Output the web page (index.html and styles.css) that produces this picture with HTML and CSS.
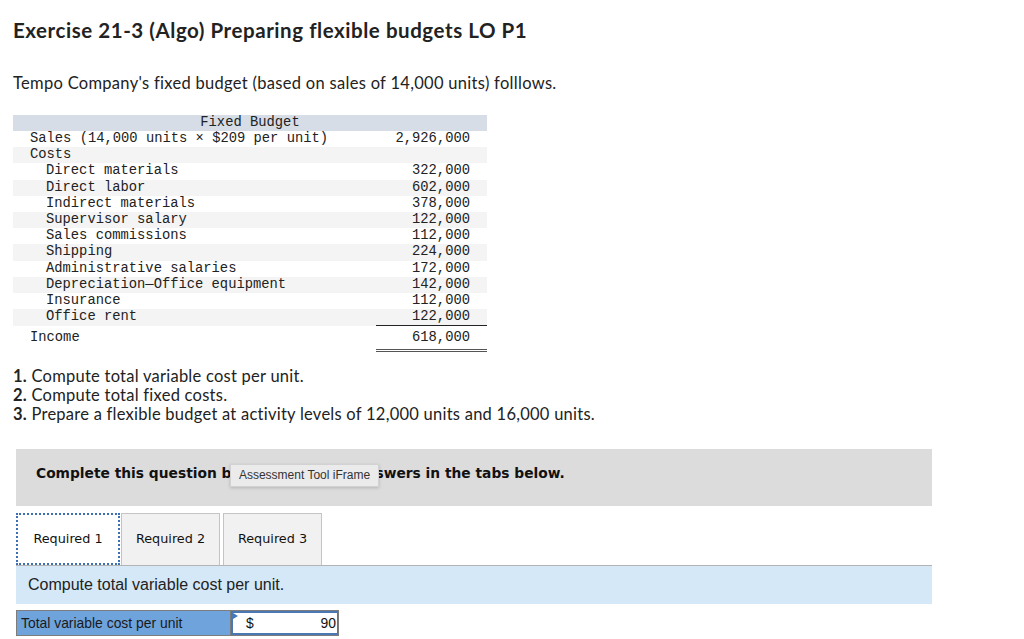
FILE: index.html
```html
<!DOCTYPE html>
<html>
<head>
<meta charset="utf-8">
<link rel="stylesheet" href="styles.css">
</head>
<body>
<div class="page">
  <h1 class="title">Exercise 21-3 (Algo) Preparing flexible budgets LO P1</h1>
  <p class="intro">Tempo Company's fixed budget (based on sales of 14,000 units) folllows.</p>

  <table class="budget">
    <thead>
      <tr><th colspan="2">Fixed Budget</th></tr>
    </thead>
    <tbody>
      <tr><td class="lbl">Sales (14,000 units × $209 per unit)</td><td class="num">2,926,000</td></tr>
      <tr class="alt"><td class="lbl">Costs</td><td class="num"></td></tr>
      <tr><td class="lbl sub">Direct materials</td><td class="num">322,000</td></tr>
      <tr class="alt"><td class="lbl sub">Direct labor</td><td class="num">602,000</td></tr>
      <tr><td class="lbl sub">Indirect materials</td><td class="num">378,000</td></tr>
      <tr class="alt"><td class="lbl sub">Supervisor salary</td><td class="num">122,000</td></tr>
      <tr><td class="lbl sub">Sales commissions</td><td class="num">112,000</td></tr>
      <tr class="alt"><td class="lbl sub">Shipping</td><td class="num">224,000</td></tr>
      <tr><td class="lbl sub">Administrative salaries</td><td class="num">172,000</td></tr>
      <tr class="alt"><td class="lbl sub">Depreciation—Office equipment</td><td class="num">142,000</td></tr>
      <tr><td class="lbl sub">Insurance</td><td class="num">112,000</td></tr>
      <tr class="alt"><td class="lbl sub">Office rent</td><td class="num under">122,000</td></tr>
      <tr class="total"><td class="lbl">Income</td><td class="num dbl">618,000</td></tr>
    </tbody>
  </table>

  <ol class="questions">
    <li><b>1.</b> Compute total variable cost per unit.</li>
    <li><b>2.</b> Compute total fixed costs.</li>
    <li><b>3.</b> Prepare a flexible budget at activity levels of 12,000 units and 16,000 units.</li>
  </ol>

  <div class="notice">
    <span class="notice-text">Complete this question by entering your answers in the tabs below.</span>
    <span class="tooltip">Assessment Tool iFrame</span>
  </div>

  <div class="tabs">
    <div class="tab active">Required 1</div>
    <div class="tab tab2">Required 2</div>
    <div class="tab tab3">Required 3</div>
  </div>
  <div class="panel">Compute total variable cost per unit.</div>

  <div class="answer">
    <div class="answer-label">Total variable cost per unit</div>
    <div class="answer-input">
      <span class="flag"></span>
      <span class="dollar">$</span>
      <span class="value">90</span>
    </div>
  </div>
</div>
</body>
</html>
```

FILE: styles.css
```css
html, body {
  margin: 0;
  padding: 0;
  background: #ffffff;
}

.page {
  padding: 0 0 0 13px;
  font-family: "Lato", "Open Sans", sans-serif;
  color: #222;
  width: 1011px;
  height: 639px;
  overflow: hidden;
}

.title {
  margin: 0;
  padding-top: 17px;
  font-size: 20.5px;
  letter-spacing: 0.55px;
  line-height: 26px;
  font-weight: 700;
  color: #222;
}

.intro {
  margin: 0;
  padding-top: 29px;
  font-size: 16.5px;
  letter-spacing: 0.3px;
  line-height: 22px;
  color: #222;
}

.budget {
  margin-top: 21px;
  border-collapse: collapse;
  width: 474px;
  font-family: "Liberation Mono", "Courier New", monospace;
  font-size: 13.8px;
  color: #222;
}

.budget th {
  background: #d7dde6;
  font-weight: normal;
  height: 16px;
  line-height: 16px;
  padding: 0;
  text-align: center;
}

.budget td {
  height: 16.2px;
  line-height: 16px;
  padding: 0;
  white-space: pre;
}

.budget tr.alt td {
  background: #f4f4f4;
}

.budget .lbl {
  padding-left: 17px;
}

.budget .lbl.sub {
  padding-left: 33px;
}

.budget .num {
  width: 94px;
  padding-right: 17px;
  text-align: right;
}

.budget .under {
  border-bottom: 1px solid #222;
}

.budget tr.total td {
  height: 19px;
  line-height: 16px;
  padding-top: 4px;
  vertical-align: top;
}

.budget .dbl {
  border-bottom: 3px double #555;
}

.questions {
  list-style: none;
  margin: 15px 0 0 0;
  padding: 0;
  font-size: 16.5px;
  letter-spacing: 0.25px;
  line-height: 19px;
  color: #222;
}

.questions b {
  font-weight: 700;
}

.notice {
  position: relative;
  margin-top: 25px;
  margin-left: 3px;
  width: 916px;
  height: 57px;
  background: #dcdcdc;
  box-sizing: border-box;
  padding: 13px 0 0 20px;
}

.notice-text {
  font-family: "DejaVu Sans", Verdana, sans-serif;
  font-weight: 700;
  font-size: 13.8px;
  line-height: 18px;
  color: #111;
}

.tooltip {
  position: absolute;
  left: 214px;
  top: 15px;
  width: 149px;
  height: 23px;
  box-sizing: border-box;
  background: #ebebeb;
  border: 1px solid #d2d2d2;
  box-shadow: 0 1px 3px rgba(0, 0, 0, 0.18);
  font-family: "Liberation Sans", Arial, sans-serif;
  font-size: 12px;
  line-height: 21px;
  color: #333;
  text-align: center;
}

.tabs {
  display: flex;
  margin-top: 7px;
  margin-left: 3px;
  width: 916px;
  height: 52px;
  border-bottom: 1px solid #b4b4b4;
  box-sizing: content-box;
}

.tab {
  box-sizing: border-box;
  height: 52px;
  font-family: "DejaVu Sans", Verdana, sans-serif;
  font-size: 12.8px;
  line-height: 50px;
  color: #111;
  text-align: center;
  background: #f1f1f1;
  border: 1px solid #c4c4c4;
  border-bottom: none;
}

.tab.active {
  width: 104px;
  background: #ffffff;
  border: 2px dotted #3d6fb5;
  line-height: 48px;
  height: 52px;
  position: relative;
  z-index: 1;
  margin-bottom: -1px;
}

.tab.tab2 {
  width: 99px;
  margin-left: 1px;
}

.tab.tab3 {
  width: 99px;
  margin-left: 3px;
}

.panel {
  margin-left: 3px;
  width: 916px;
  height: 38px;
  background: #d5e8f8;
  box-sizing: border-box;
  padding-left: 12px;
  font-family: "Liberation Sans", Arial, sans-serif;
  font-size: 16px;
  line-height: 38px;
  color: #222;
}

.answer {
  display: flex;
  margin-top: 6px;
  margin-left: 3px;
  width: 323px;
  height: 26px;
  box-sizing: border-box;
  border: 1px solid #7d7d7d;
}

.answer-label {
  width: 214px;
  background: #6fa3dc;
  box-sizing: border-box;
  padding-left: 4px;
  font-family: "Liberation Sans", Arial, sans-serif;
  font-size: 13.9px;
  line-height: 24px;
  color: #1a1a1a;
  border-right: 1px solid #7d7d7d;
}

.answer-input {
  position: relative;
  flex: 1;
  display: flex;
  justify-content: space-between;
  background: #fff;
  box-sizing: border-box;
  border: 2px solid #4a78b3;
  border-right-width: 1px;
  padding: 0 1px 0 13px;
  font-family: "Liberation Sans", Arial, sans-serif;
  font-size: 13.9px;
  line-height: 20px;
  color: #111;
}

.flag {
  position: absolute;
  left: 0;
  top: 0;
  width: 0;
  height: 0;
  border-top: 3px solid transparent;
  border-bottom: 3px solid transparent;
  border-left: 5px solid #3f78c4;
}
```
